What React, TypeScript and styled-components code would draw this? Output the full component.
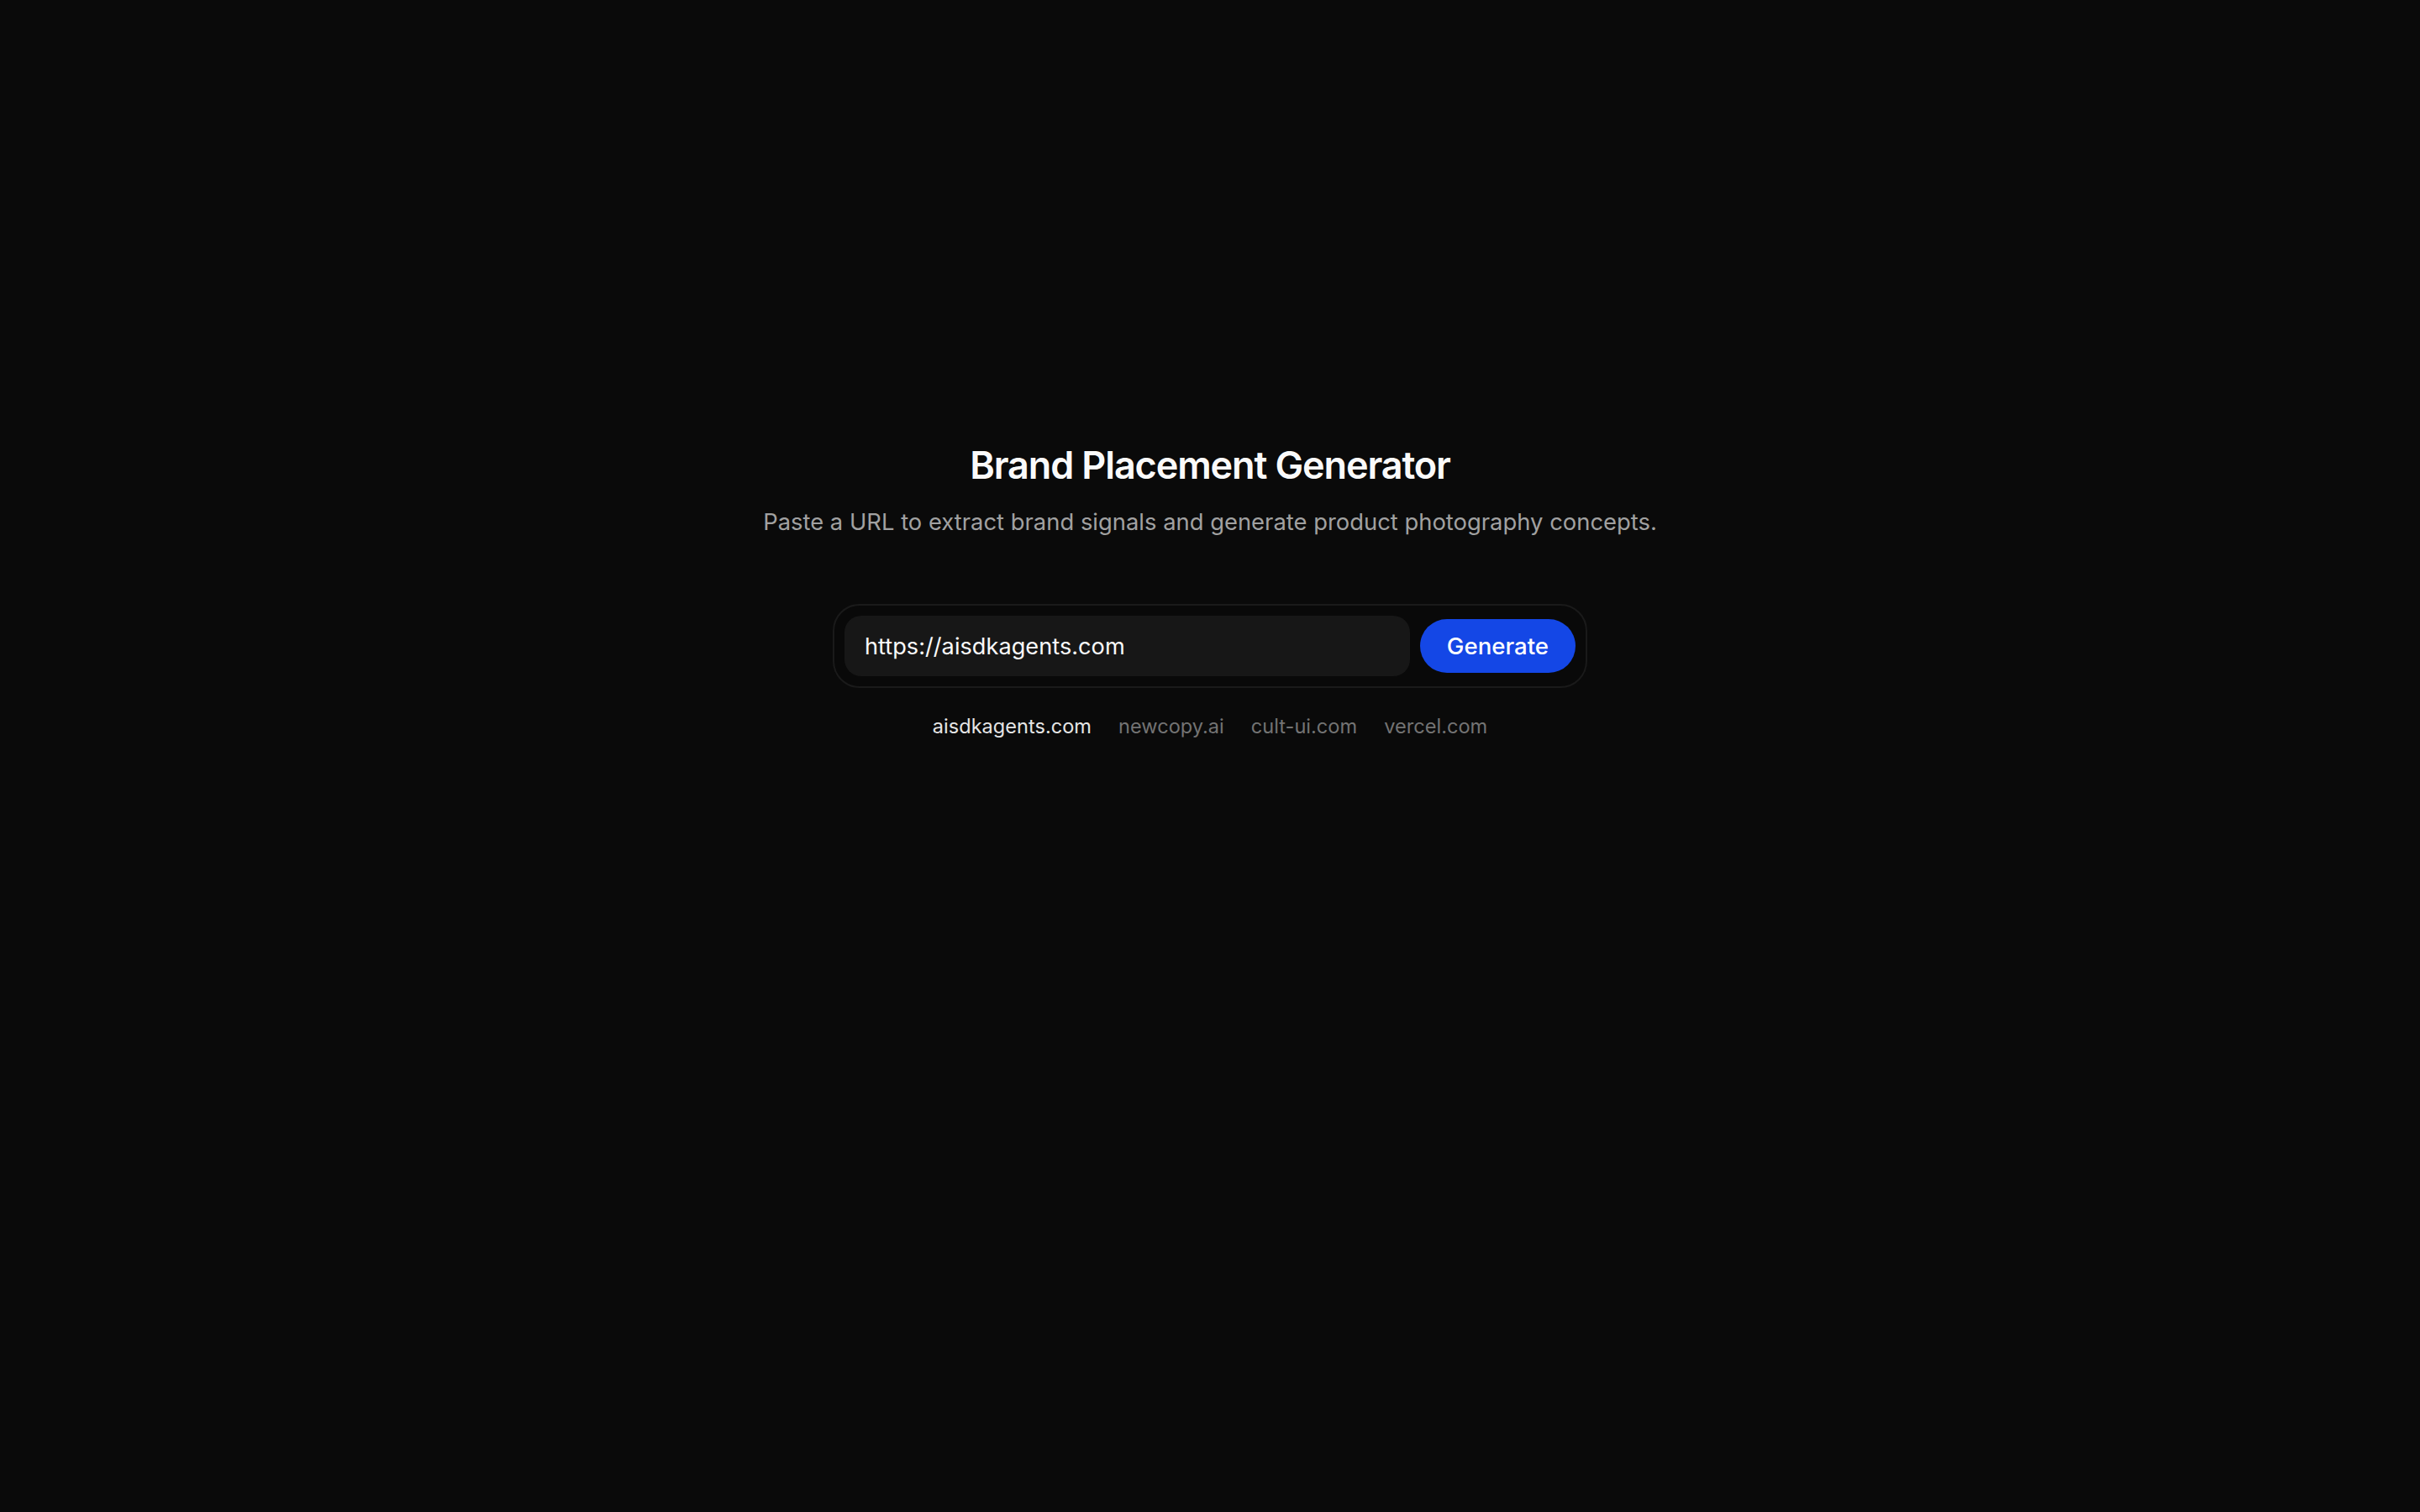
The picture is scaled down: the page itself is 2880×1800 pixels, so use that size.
import React, { useState } from 'react';
import styled, { createGlobalStyle } from 'styled-components';

// Sizes are in device pixels of the 2880x1800 frame (the reference is a 2x capture).

const GlobalStyle = createGlobalStyle`
  * {
    box-sizing: border-box;
  }

  html,
  body {
    margin: 0;
    padding: 0;
    background-color: #0a0a0a;
    font-family: Inter, "Noto Sans", "Liberation Sans", sans-serif;
    -webkit-font-smoothing: antialiased;
  }

  #root {
    min-height: 100vh;
  }
`;

const Page = styled.main`
  min-height: 100vh;
  display: flex;
  flex-direction: column;
  align-items: center;
  padding: 522px 32px 0;
  background-color: #0a0a0a;
`;

const Header = styled.header`
  display: flex;
  flex-direction: column;
  align-items: center;
  gap: 15px;
  text-align: center;
`;

const Title = styled.h1`
  margin: 0;
  font-size: 45px;
  line-height: 64px;
  font-weight: 600;
  letter-spacing: -0.025em;
  color: #fafafa;
`;

const Subtitle = styled.p`
  margin: 0;
  font-size: 27.4px;
  line-height: 40px;
  color: #a1a1a1;
`;

const Form = styled.form`
  display: flex;
  align-items: center;
  gap: 12px;
  width: 100%;
  max-width: 898px;
  margin-top: 78px;
  padding: 12px;
  border: 2px solid #1a1a1a;
  border-radius: 32px;
  background-color: #090909;
`;

const UrlInput = styled.input`
  flex: 1;
  min-width: 0;
  height: 72px;
  padding: 0 24px;
  border: none;
  border-radius: 20px;
  background-color: #171717;
  color: #fafafa;
  font-family: inherit;
  font-size: 27.2px;

  &:focus {
    outline: none;
  }
`;

const GenerateButton = styled.button`
  flex-shrink: 0;
  height: 64px;
  padding: 0 32px;
  border: none;
  border-radius: 9999px;
  background-color: #1447e6;
  color: #ffffff;
  font-family: inherit;
  font-size: 27.6px;
  font-weight: 500;
  cursor: pointer;

  &:hover {
    background-color: #1d4ed8;
  }
`;

const Suggestions = styled.div`
  display: flex;
  align-items: center;
  gap: 32px;
  margin-top: 30px;
`;

const Suggestion = styled.button<{ $active?: boolean }>`
  padding: 0;
  border: none;
  background: none;
  font-family: inherit;
  font-size: 23.6px;
  line-height: 32px;
  color: ${props => (props.$active ? '#e5e5e5' : '#737373')};
  cursor: pointer;

  &:hover {
    color: #e5e5e5;
  }
`;

const examples = ['aisdkagents.com', 'newcopy.ai', 'cult-ui.com', 'vercel.com'];

const App: React.FC = () => {
  const [url, setUrl] = useState('https://aisdkagents.com');

  const current = url.replace(/^https?:\/\//, '').replace(/\/$/, '');

  return (
    <>
      <GlobalStyle />
      <Page>
        <Header>
          <Title>Brand Placement Generator</Title>
          <Subtitle>
            Paste a URL to extract brand signals and generate product photography concepts.
          </Subtitle>
        </Header>

        <Form onSubmit={e => e.preventDefault()}>
          <UrlInput
            value={url}
            onChange={e => setUrl(e.target.value)}
            placeholder="https://example.com"
          />
          <GenerateButton type="submit">Generate</GenerateButton>
        </Form>

        <Suggestions>
          {examples.map(domain => (
            <Suggestion
              key={domain}
              type="button"
              $active={current === domain}
              onClick={() => setUrl(`https://${domain}`)}
            >
              {domain}
            </Suggestion>
          ))}
        </Suggestions>
      </Page>
    </>
  );
};

export default App;
